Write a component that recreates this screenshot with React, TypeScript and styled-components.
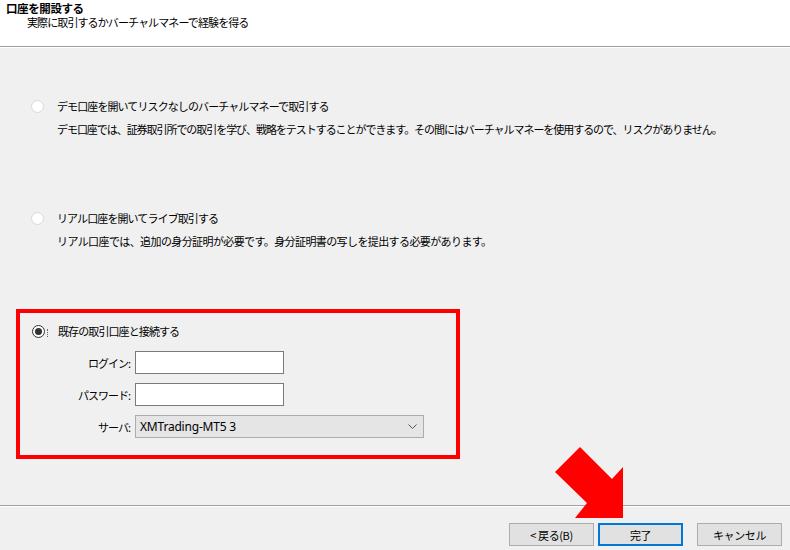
import styled, { createGlobalStyle } from 'styled-components';

const Global = createGlobalStyle`
  html, body { margin: 0; padding: 0; }
  body {
    background: #f0f0f0;
    font-family: "Noto Sans CJK JP", "Noto Sans", sans-serif;
    font-size: 11px;
    color: #000;
  }
`;

const Window = styled.div`
  position: relative;
  width: 790px;
  height: 550px;
  display: flex;
  flex-direction: column;
  background: #f0f0f0;
  overflow: hidden;
`;

const Header = styled.div`
  height: 47px;
  background: #fff;
  border-bottom: 1px solid #a0a0a0;
  box-shadow: 0 1px 0 #fff;
  padding: 1px 0 0 6px;
  box-sizing: border-box;
`;

const Title = styled.div`
  font-weight: bold;
  font-size: 11.5px;
  line-height: 14px;
  letter-spacing: -0.4px;
`;

const Subtitle = styled.div`
  padding-left: 21px;
  line-height: 14px;
  letter-spacing: -0.9px;
`;

const Body = styled.div`
  flex: 1;
  padding: 51px 0 0 31px;
  box-sizing: border-box;
`;

const Option = styled.div<{ $gap: number }>`
  margin-bottom: ${p => p.$gap}px;
`;

const OptionRow = styled.div`
  display: flex;
  align-items: center;
  height: 16px;
  gap: 13px;
  letter-spacing: -0.9px;
`;

const Radio = styled.span<{ $checked?: boolean }>`
  position: relative;
  width: 13px;
  height: 13px;
  box-sizing: border-box;
  border-radius: 50%;
  background: #fff;
  border: 1px solid ${p => (p.$checked ? '#333' : '#d9d9d9')};
  flex: none;
  &::after {
    content: '';
    display: ${p => (p.$checked ? 'block' : 'none')};
    position: absolute;
    left: 2px;
    top: 2px;
    width: 7px;
    height: 7px;
    border-radius: 50%;
    background: #333;
  }
`;

const Focus = styled.span`
  width: 1px;
  height: 8px;
  margin: 4px -4px 0 -11px;
  border-left: 1px dotted #666;
`;

const Description = styled.div<{ $tight?: number }>`
  margin: 8px 0 0 26px;
  line-height: 14px;
  letter-spacing: ${p => p.$tight ?? -0.9}px;
`;

const Highlight = styled.div`
  margin: 0 0 0 -15px;
  width: 444px;
  height: 150px;
  box-sizing: border-box;
  border: 4px solid #ff0000;
  padding: 10px 0 0 12px;
`;

const Fields = styled.div`
  display: grid;
  grid-template-columns: 98px auto;
  column-gap: 5px;
  row-gap: 9px;
  margin-top: 12px;
  align-items: center;
`;

const Label = styled.label`
  text-align: right;
  letter-spacing: -1px;
`;

const TextBox = styled.div`
  width: 149px;
  height: 23px;
  box-sizing: border-box;
  background: #fff;
  border: 1px solid #7a7a7a;
`;

const Select = styled.div`
  width: 289px;
  height: 23px;
  box-sizing: border-box;
  background: #e5e5e5;
  border: 1px solid #acacac;
  display: flex;
  align-items: center;
  justify-content: space-between;
  padding: 0 6px 0 4px;
  font-family: "Noto Sans", sans-serif;
  font-size: 12px;
  letter-spacing: -0.2px;
`;

const Footer = styled.div`
  height: 45px;
  border-top: 1px solid #a0a0a0;
  box-shadow: inset 0 1px 0 #fff;
  display: flex;
  justify-content: flex-end;
  align-items: flex-start;
  padding: 17px 8px 0 0;
  box-sizing: border-box;
`;

const Button = styled.div<{ $primary?: boolean; $space?: number }>`
  width: 85px;
  height: 23px;
  box-sizing: border-box;
  margin-left: ${p => p.$space ?? 0}px;
  background: #e1e1e1;
  border: ${p => (p.$primary ? '2px solid #0078d7' : '1px solid #adadad')};
  display: flex;
  align-items: center;
  justify-content: center;
  letter-spacing: -0.4px;
  white-space: pre;
`;

const Arrow = styled.svg`
  position: absolute;
  left: 0;
  top: 0;
  pointer-events: none;
`;

export default function App() {
  return (
    <Window>
      <Global />
      <Header>
        <Title>口座を開設する</Title>
        <Subtitle>実際に取引するかバーチャルマネーで経験を得る</Subtitle>
      </Header>
      <Body>
        <Option $gap={74}>
          <OptionRow>
            <Radio />
            デモ口座を開いてリスクなしのバーチャルマネーで取引する
          </OptionRow>
          <Description $tight={-1.05}>
            デモ口座では、証券取引所での取引を学び、戦略をテストすることができます。その間にはバーチャルマネーを使用するので、リスクがありません。
          </Description>
        </Option>
        <Option $gap={61}>
          <OptionRow>
            <Radio />
            リアル口座を開いてライブ取引する
          </OptionRow>
          <Description $tight={-0.6}>
            リアル口座では、追加の身分証明が必要です。身分証明書の写しを提出する必要があります。
          </Description>
        </Option>
        <Highlight>
          <OptionRow>
            <Radio $checked />
            <Focus />
            既存の取引口座と接続する
          </OptionRow>
          <Fields>
            <Label>ログイン:</Label>
            <TextBox />
            <Label>パスワード:</Label>
            <TextBox />
            <Label>サーバ:</Label>
            <Select>
              XMTrading-MT5 3
              <svg width="9" height="6" viewBox="0 0 9 6">
                <path d="M0.5 0.5 L4.5 4.5 L8.5 0.5" fill="none" stroke="#555" strokeWidth="1" />
              </svg>
            </Select>
          </Fields>
        </Highlight>
      </Body>
      <Footer>
        <Button>{'< 戻る(B)'}</Button>
        <Button $primary $space={4}>完了</Button>
        <Button $space={14}>キャンセル</Button>
      </Footer>
      <Arrow width="790" height="550" viewBox="0 0 790 550">
        <polygon
          points="580,447 612,479 623,467 623,518 575,518 587,503 555,472"
          fill="#ff0000"
        />
      </Arrow>
    </Window>
  );
}
